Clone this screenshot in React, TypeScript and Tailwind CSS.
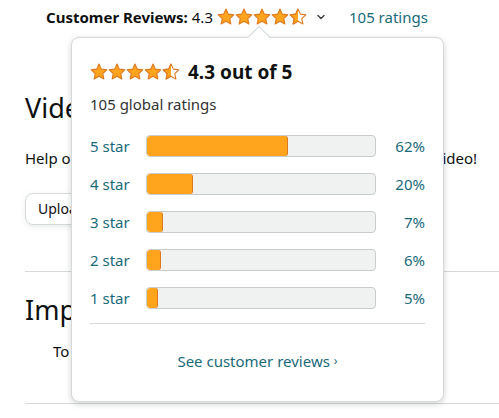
import { ChevronDown } from "lucide-react";

const STAR_PATH = "M10 1.2l2.6 5.6 6.1.7-4.5 4.2 1.2 6-5.4-3-5.4 3 1.2-6L1.3 7.5l6.1-.7z";

const Star = ({ fill, id }: { fill: "full" | "half"; id: string }) => (
    <svg width="18" height="18" viewBox="0 0 20 20" className="shrink-0">
        {fill === "half" && (
            <defs>
                <clipPath id={id}>
                    <rect x="0" y="0" width="10" height="20" />
                </clipPath>
            </defs>
        )}
        {fill === "full" ? (
            <path d={STAR_PATH} fill="#FFA41C" stroke="#DE7921" strokeWidth="1.2" strokeLinejoin="round" />
        ) : (
            <>
                <path d={STAR_PATH} fill="#fff" stroke="#DE7921" strokeWidth="1.2" strokeLinejoin="round" />
                <path d={STAR_PATH} fill="#FFA41C" stroke="#DE7921" strokeWidth="1.2" strokeLinejoin="round" clipPath={`url(#${id})`} />
            </>
        )}
    </svg>
);

const Stars = ({ prefix }: { prefix: string }) => (
    <div className="flex items-center">
        <Star fill="full" id={`${prefix}-1`} />
        <Star fill="full" id={`${prefix}-2`} />
        <Star fill="full" id={`${prefix}-3`} />
        <Star fill="full" id={`${prefix}-4`} />
        <Star fill="half" id={`${prefix}-5`} />
    </div>
);

const rows = [
    { label: "5 star", pct: 62 },
    { label: "4 star", pct: 20 },
    { label: "3 star", pct: 7 },
    { label: "2 star", pct: 6 },
    { label: "1 star", pct: 5 },
];

export default function App() {
    return (
        <div className="relative w-[499px] h-[418px] overflow-hidden bg-white text-[#0f1111] font-['Noto_Sans',sans-serif]">
            {/* header line */}
            <div className="flex items-center h-[34px] pl-[46px] text-[15px]">
                <span className="font-bold">Customer Reviews:</span>
                <span className="ml-[4px]">4.3</span>
                <div className="ml-[4px]">
                    <Stars prefix="top" />
                </div>
                <ChevronDown className="ml-[8px] h-3 w-3 text-[#333]" strokeWidth={2.5} />
                <span className="ml-[22px] text-[#1a6a7a]">105 ratings</span>
            </div>

            {/* page content under the popover */}
            <div className="pl-[25px]">
                <h2 className="mt-[56px] text-[27px] leading-[36px]">Videos</h2>
                <p className="mt-[21px] text-[15px] whitespace-nowrap">Help others learn more about this product by uploading a video!</p>
                <button className="mt-[23px] h-[32px] px-[12px] rounded-[8px] border border-[#d5d9d9] shadow-[0_2px_5px_rgba(213,217,217,0.5)] text-[14px]">
                    Upload your video
                </button>
                <div className="mt-[46px] border-t border-[#d5d9d9]" />
                <h2 className="mt-[20px] text-[27px] leading-[36px]">Important information</h2>
                <p className="mt-[12px] pl-[28px] text-[15px] whitespace-nowrap">To report an issue with this product, click here.</p>
                <div className="mt-[41px] border-t border-[#d5d9d9]" />
            </div>

            {/* popover */}
            <div className="absolute left-[71px] top-[37px] w-[373px] h-[365px] rounded-[8px] border border-[#d5d9d9] bg-white shadow-[0_2px_6px_rgba(15,17,17,0.18)]">
                <div className="absolute left-[179px] top-[-9px] h-[16px] w-[16px] rotate-45 border-l border-t border-[#d5d9d9] bg-white" />
                <div className="relative px-[18px] pt-[22px]">
                    <div className="flex items-center">
                        <Stars prefix="pop" />
                        <span className="ml-[8px] text-[19px] font-bold leading-[24px]">4.3 out of 5</span>
                    </div>
                    <div className="mt-[10px] text-[15px] leading-[20px] text-[#333]">105 global ratings</div>
                    <div className="mt-[21px] flex flex-col gap-[16px]">
                        {rows.map((r) => (
                            <div key={r.label} className="flex items-center h-[22px] text-[15px] text-[#1a6a7a]">
                                <span className="w-[56px]">{r.label}</span>
                                <div className="h-[22px] w-[230px] rounded-[4px] border border-[#c9cccc] bg-[#f0f2f2] overflow-hidden">
                                    <div
                                        className="h-full rounded-[3px] border-r border-[#de7921] bg-[#FFA41C]"
                                        style={{ width: `${r.pct}%` }}
                                    />
                                </div>
                                <span className="flex-1 text-right">{r.pct}%</span>
                            </div>
                        ))}
                    </div>
                    <div className="mt-[14px] border-t border-[#d5d9d9]" />
                    <div className="mt-[27px] flex justify-center items-center text-[15px] leading-[20px] text-[#1a6a7a]">
                        See customer reviews
                        <span className="ml-[4px] text-[12px]">›</span>
                    </div>
                </div>
            </div>
        </div>
    );
}
